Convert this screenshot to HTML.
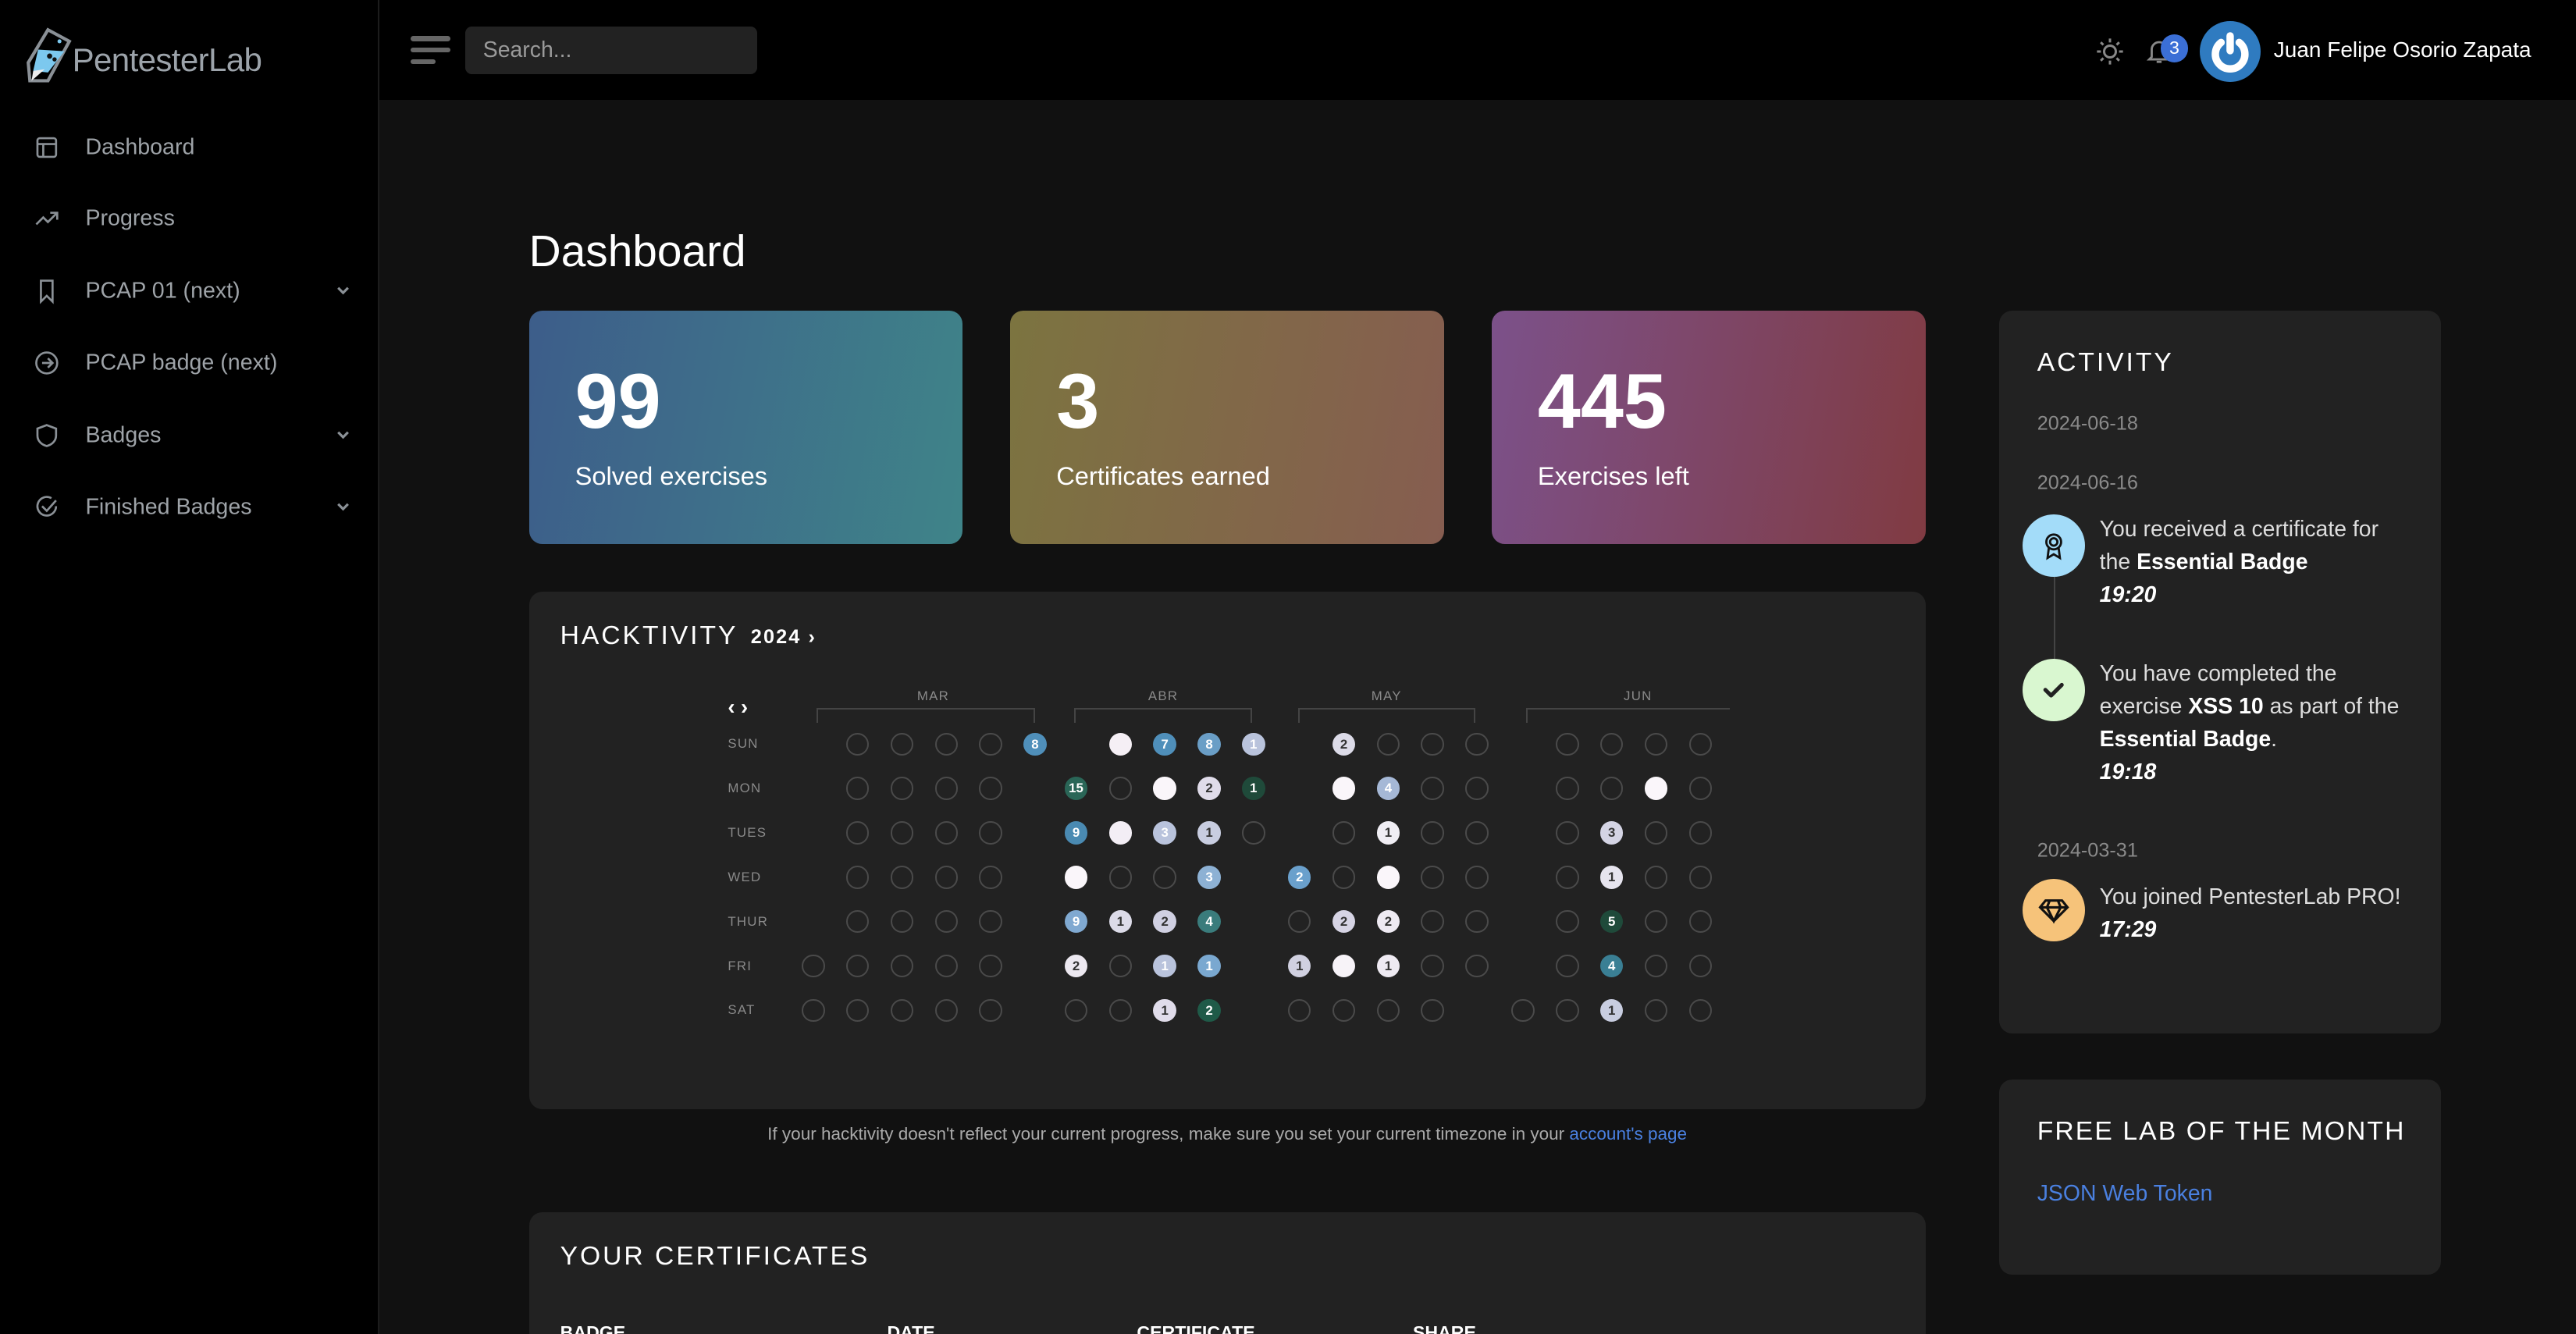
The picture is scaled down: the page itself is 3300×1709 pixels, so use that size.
<!DOCTYPE html>
<html><head><meta charset="utf-8">
<style>
*{margin:0;padding:0;box-sizing:border-box}
html,body{width:3300px;height:1708px;overflow:hidden;background:#111}
#r{position:absolute;left:0;top:0;width:1568px;height:812px;zoom:2.1046;font-family:"Liberation Sans",sans-serif;background:#111;overflow:hidden}
.a{position:absolute}
.side{left:0;top:0;width:231px;height:812px;background:#000;border-right:1px solid #1c1c1c}
.top{left:231px;top:0;right:0;height:61px;background:#000}
.nav{position:absolute;left:52px;font-size:13.6px;color:#9ea3a8;transform:translateY(-50%)}
.ico{position:absolute;left:20px;width:17px;height:17px;transform:translateY(-50%)}
.chev{position:absolute;left:204px;width:10px;height:10px;transform:translateY(-50%)}
.card{position:absolute;top:189px;width:264px;height:142px;border-radius:8px;color:#fff}
.card .n{position:absolute;left:28px;top:29px;font-size:47px;font-weight:bold;line-height:52px}
.card .l{position:absolute;left:28px;top:92px;font-size:15.5px}
.panel{position:absolute;background:#222;border-radius:8px}
.h{font-size:16px;letter-spacing:1.4px;color:#fff;position:absolute}
.c{position:absolute;width:14px;height:14px;border-radius:50%;margin:-7px 0 0 -7px;font-size:8px;text-align:center;line-height:14px;color:#333;font-weight:bold}
.e{border:1px solid #4a4a4a}
.w{color:#fff}
.d{position:absolute;left:443px;font-size:8px;color:#8a8a8a;letter-spacing:.6px;transform:translateY(-50%)}
.m{position:absolute;top:419px;font-size:8px;color:#8a8a8a;letter-spacing:.6px;transform:translateX(-50%)}
.br{position:absolute;top:431px;height:9px;border:1px solid #444;border-bottom:none}
.dt{position:absolute;left:1240px;font-size:12px;color:#8a8a8a;transform:translateY(-50%)}
.tx{position:absolute;left:1278px;font-size:13.5px;line-height:20px;color:#ddd}
.tx b{color:#fff}
.tx i{color:#fff;font-weight:bold}
.ci{position:absolute;left:1231px;width:38px;height:38px;border-radius:50%}
.th{position:absolute;top:805px;font-size:11px;font-weight:bold;color:#fff}
</style></head><body><div id="r">
<div class="a side"></div>
<div class="a top"></div>
<svg class="a" style="left:15px;top:16px" width="30" height="36" viewBox="0 0 30 36">
<path d="M14 2 L27 9 L14 33 L3 33 L2 22 Z" fill="none" stroke="#8a9096" stroke-width="2"/>
<path d="M8 14 L24 15 L14 28 L5 27 Z" fill="#7cc8ee"/>
<path d="M5 27 L12 26 L4 33 Z" fill="#eee"/>
<circle cx="15" cy="18" r="1.6" fill="#111"/><circle cx="18" cy="20" r="1.3" fill="#111"/><circle cx="21" cy="9" r="1.2" fill="#7cc8ee"/>
</svg>
<div class="a" style="left:44px;top:25px;font-size:20px;color:#9ca3aa;letter-spacing:-.3px">PentesterLab</div>
<svg class="ico" style="top:90px" viewBox="0 0 24 24" fill="none" stroke="#8a9096" stroke-width="1.8"><rect x="4" y="4" width="16" height="16" rx="2"/><path d="M4 9h16M9 9v11"/></svg>
<div class="nav" style="top:90px">Dashboard</div>
<svg class="ico" style="top:133px" viewBox="0 0 24 24" fill="none" stroke="#8a9096" stroke-width="1.8"><path d="M3 17l6-6 4 4 8-8M15 7h6v6"/></svg>
<div class="nav" style="top:133px">Progress</div>
<svg class="ico" style="top:177px" viewBox="0 0 24 24" fill="none" stroke="#8a9096" stroke-width="1.8"><path d="M7 3h10v18l-5-5-5 5z"/></svg>
<div class="nav" style="top:177px">PCAP 01 (next)</div>
<svg class="ico" style="top:221px" viewBox="0 0 24 24" fill="none" stroke="#8a9096" stroke-width="1.8"><circle cx="12" cy="12" r="9"/><path d="M8 12h8M13 8l4 4-4 4"/></svg>
<div class="nav" style="top:221px">PCAP badge (next)</div>
<svg class="ico" style="top:265px" viewBox="0 0 24 24" fill="none" stroke="#8a9096" stroke-width="1.8"><path d="M12 3l8 3v6c0 5-4 8-8 9-4-1-8-4-8-9V6z"/></svg>
<div class="nav" style="top:265px">Badges</div>
<svg class="ico" style="top:309px" viewBox="0 0 24 24" fill="none" stroke="#8a9096" stroke-width="1.8"><path d="M20 11a8 8 0 1 1-4-6.9"/><path d="M8 11l4 4 8-9"/></svg>
<div class="nav" style="top:309px">Finished Badges</div>
<svg class="chev" style="top:177px" viewBox="0 0 10 10"><path d="M2 3l3 3 3-3" fill="none" stroke="#8a9096" stroke-width="1.5"/></svg>
<svg class="chev" style="top:265px" viewBox="0 0 10 10"><path d="M2 3l3 3 3-3" fill="none" stroke="#8a9096" stroke-width="1.5"/></svg>
<svg class="chev" style="top:309px" viewBox="0 0 10 10"><path d="M2 3l3 3 3-3" fill="none" stroke="#8a9096" stroke-width="1.5"/></svg>
<div class="a" style="left:250px;top:22px;width:24px;height:3px;background:#666;border-radius:2px"></div>
<div class="a" style="left:250px;top:29px;width:24px;height:3px;background:#666;border-radius:2px"></div>
<div class="a" style="left:250px;top:36px;width:15px;height:3px;background:#666;border-radius:2px"></div>
<div class="a" style="left:283px;top:16px;width:178px;height:29px;background:#222;border-radius:4px"></div>
<div class="a" style="left:294px;top:23px;font-size:13.5px;color:#9a9a9a">Search...</div>
<svg class="a" style="left:1275px;top:22px" width="19" height="19" viewBox="0 0 24 24" fill="none" stroke="#888" stroke-width="1.8"><circle cx="12" cy="12" r="4.5"/><path d="M12 2v3M12 19v3M2 12h3M19 12h3M4.9 4.9l2 2M17.1 17.1l2 2M4.9 19.1l2-2M17.1 6.9l2-2"/></svg>
<svg class="a" style="left:1305px;top:21px" width="18" height="20" viewBox="0 0 24 24" fill="none" stroke="#888" stroke-width="1.8"><path d="M6 17V11a6 6 0 0 1 12 0v6l2 2H4z M10 21h4"/></svg>
<div class="a" style="left:1315px;top:21px;width:17px;height:17px;border-radius:50%;background:#3b6fd6;color:#fff;font-size:11px;text-align:center;line-height:17px">3</div>
<div class="a" style="left:1339px;top:13px;width:37px;height:37px;border-radius:50%;background:#2f7bc0"></div>
<svg class="a" style="left:1339px;top:13px" width="37" height="37" viewBox="0 0 37 37"><path d="M13 13 A9 9 0 1 0 24 13" fill="none" stroke="#fff" stroke-width="4.5" stroke-linecap="round"/><path d="M18.5 9v9" stroke="#fff" stroke-width="4.5" stroke-linecap="round"/></svg>
<div class="a" style="left:1384px;top:23px;font-size:13.3px;color:#fff">Juan Felipe Osorio Zapata</div>
<div class="a" style="left:322px;top:138px;font-size:27px;color:#fff">Dashboard</div>
<div class="card" style="left:322px;background:linear-gradient(100deg,#3d5d8a,#3f8489)"><div class="n">99</div><div class="l">Solved exercises</div></div>
<div class="card" style="left:615px;background:linear-gradient(100deg,#7c7440,#865d50)"><div class="n">3</div><div class="l">Certificates earned</div></div>
<div class="card" style="left:908px;background:linear-gradient(100deg,#7c518a,#803b42)"><div class="n">445</div><div class="l">Exercises left</div></div>
<div class="panel" style="left:322px;top:360px;width:850px;height:315px"></div>
<div class="h" style="left:341px;top:378px">HACKTIVITY</div>
<div class="a" style="left:457px;top:381px;font-size:12px;color:#fff;font-weight:bold;letter-spacing:1px">2024 ›</div>
<div class="a" style="left:443px;top:423px;font-size:13px;color:#fff;font-weight:bold">‹ ›</div>
<div class="m" style="left:568px">MAR</div><div class="m" style="left:708px">ABR</div><div class="m" style="left:844px">MAY</div><div class="m" style="left:997px">JUN</div>
<div class="br" style="left:497px;width:133px"></div><div class="br" style="left:654px;width:108px"></div><div class="br" style="left:790px;width:108px"></div><div class="br" style="left:929px;width:124px;border-right:none"></div>
<div class="d" style="top:453px">SUN</div><div class="d" style="top:480px">MON</div><div class="d" style="top:507px">TUES</div><div class="d" style="top:534px">WED</div><div class="d" style="top:561px">THUR</div><div class="d" style="top:588px">FRI</div><div class="d" style="top:615px">SAT</div>
<div class="c e" style="left:522px;top:453px"></div><div class="c e" style="left:549px;top:453px"></div><div class="c e" style="left:576px;top:453px"></div><div class="c e" style="left:603px;top:453px"></div>
<div class="c w" style="left:630px;top:453px;background:#4f8fba">8</div>
<div class="c" style="left:682px;top:453px;background:#f5eff5"></div>
<div class="c w" style="left:709px;top:453px;background:#4f8fba">7</div>
<div class="c w" style="left:736px;top:453px;background:#6a9ec6">8</div>
<div class="c w" style="left:763px;top:453px;background:#b9c3dc">1</div>
<div class="c" style="left:818px;top:453px;background:#dcdbe8">2</div>
<div class="c e" style="left:845px;top:453px"></div><div class="c e" style="left:872px;top:453px"></div><div class="c e" style="left:899px;top:453px"></div>
<div class="c e" style="left:954px;top:453px"></div><div class="c e" style="left:981px;top:453px"></div><div class="c e" style="left:1008px;top:453px"></div><div class="c e" style="left:1035px;top:453px"></div>
<div class="c e" style="left:522px;top:480px"></div><div class="c e" style="left:549px;top:480px"></div><div class="c e" style="left:576px;top:480px"></div><div class="c e" style="left:603px;top:480px"></div>
<div class="c w" style="left:655px;top:480px;background:#2a6657">15</div>
<div class="c e" style="left:682px;top:480px"></div>
<div class="c" style="left:709px;top:480px;background:#faf6fa"></div>
<div class="c" style="left:736px;top:480px;background:#e0dcea">2</div>
<div class="c w" style="left:763px;top:480px;background:#1f4a3a">1</div>
<div class="c" style="left:818px;top:480px;background:#faf6fa"></div>
<div class="c w" style="left:845px;top:480px;background:#a5b8d6">4</div>
<div class="c e" style="left:872px;top:480px"></div><div class="c e" style="left:899px;top:480px"></div>
<div class="c e" style="left:954px;top:480px"></div><div class="c e" style="left:981px;top:480px"></div>
<div class="c" style="left:1008px;top:480px;background:#faf6fa"></div>
<div class="c e" style="left:1035px;top:480px"></div>
<div class="c e" style="left:522px;top:507px"></div><div class="c e" style="left:549px;top:507px"></div><div class="c e" style="left:576px;top:507px"></div><div class="c e" style="left:603px;top:507px"></div>
<div class="c w" style="left:655px;top:507px;background:#4a8ab2">9</div>
<div class="c" style="left:682px;top:507px;background:#f3eef5"></div>
<div class="c w" style="left:709px;top:507px;background:#b9c3dc">3</div>
<div class="c" style="left:736px;top:507px;background:#c8cde0">1</div>
<div class="c e" style="left:763px;top:507px"></div>
<div class="c e" style="left:818px;top:507px"></div>
<div class="c" style="left:845px;top:507px;background:#f0eef4">1</div>
<div class="c e" style="left:872px;top:507px"></div><div class="c e" style="left:899px;top:507px"></div>
<div class="c e" style="left:954px;top:507px"></div>
<div class="c" style="left:981px;top:507px;background:#d4d4e4">3</div>
<div class="c e" style="left:1008px;top:507px"></div><div class="c e" style="left:1035px;top:507px"></div>
<div class="c e" style="left:522px;top:534px"></div><div class="c e" style="left:549px;top:534px"></div><div class="c e" style="left:576px;top:534px"></div><div class="c e" style="left:603px;top:534px"></div>
<div class="c" style="left:655px;top:534px;background:#faf6fa"></div>
<div class="c e" style="left:682px;top:534px"></div><div class="c e" style="left:709px;top:534px"></div>
<div class="c w" style="left:736px;top:534px;background:#8db1d4">3</div>
<div class="c w" style="left:791px;top:534px;background:#6aa0cc">2</div>
<div class="c e" style="left:818px;top:534px"></div>
<div class="c" style="left:845px;top:534px;background:#faf6fa"></div>
<div class="c e" style="left:872px;top:534px"></div><div class="c e" style="left:899px;top:534px"></div>
<div class="c e" style="left:954px;top:534px"></div>
<div class="c" style="left:981px;top:534px;background:#e6e4ee">1</div>
<div class="c e" style="left:1008px;top:534px"></div><div class="c e" style="left:1035px;top:534px"></div>
<div class="c e" style="left:522px;top:561px"></div><div class="c e" style="left:549px;top:561px"></div><div class="c e" style="left:576px;top:561px"></div><div class="c e" style="left:603px;top:561px"></div>
<div class="c w" style="left:655px;top:561px;background:#80a9d1">9</div>
<div class="c" style="left:682px;top:561px;background:#dcdbe8">1</div>
<div class="c" style="left:709px;top:561px;background:#d0d0e2">2</div>
<div class="c w" style="left:736px;top:561px;background:#3a7c7c">4</div>
<div class="c e" style="left:791px;top:561px"></div>
<div class="c" style="left:818px;top:561px;background:#d6d4e4">2</div>
<div class="c" style="left:845px;top:561px;background:#eeeaf2">2</div>
<div class="c e" style="left:872px;top:561px"></div><div class="c e" style="left:899px;top:561px"></div>
<div class="c e" style="left:954px;top:561px"></div>
<div class="c w" style="left:981px;top:561px;background:#1f4a3a">5</div>
<div class="c e" style="left:1008px;top:561px"></div><div class="c e" style="left:1035px;top:561px"></div>
<div class="c e" style="left:495px;top:588px"></div><div class="c e" style="left:522px;top:588px"></div><div class="c e" style="left:549px;top:588px"></div><div class="c e" style="left:576px;top:588px"></div><div class="c e" style="left:603px;top:588px"></div>
<div class="c" style="left:655px;top:588px;background:#ece8f0">2</div>
<div class="c e" style="left:682px;top:588px"></div>
<div class="c w" style="left:709px;top:588px;background:#b9c3dc">1</div>
<div class="c w" style="left:736px;top:588px;background:#7aa8d0">1</div>
<div class="c" style="left:791px;top:588px;background:#d0d0e0">1</div>
<div class="c" style="left:818px;top:588px;background:#f7f3f8"></div>
<div class="c" style="left:845px;top:588px;background:#eeeaf2">1</div>
<div class="c e" style="left:872px;top:588px"></div><div class="c e" style="left:899px;top:588px"></div>
<div class="c e" style="left:954px;top:588px"></div>
<div class="c w" style="left:981px;top:588px;background:#3a7f94">4</div>
<div class="c e" style="left:1008px;top:588px"></div><div class="c e" style="left:1035px;top:588px"></div>
<div class="c e" style="left:495px;top:615px"></div><div class="c e" style="left:522px;top:615px"></div><div class="c e" style="left:549px;top:615px"></div><div class="c e" style="left:576px;top:615px"></div><div class="c e" style="left:603px;top:615px"></div>
<div class="c e" style="left:655px;top:615px"></div><div class="c e" style="left:682px;top:615px"></div>
<div class="c" style="left:709px;top:615px;background:#e0dcea">1</div>
<div class="c w" style="left:736px;top:615px;background:#1f5a48">2</div>
<div class="c e" style="left:791px;top:615px"></div><div class="c e" style="left:818px;top:615px"></div><div class="c e" style="left:845px;top:615px"></div><div class="c e" style="left:872px;top:615px"></div>
<div class="c e" style="left:927px;top:615px"></div><div class="c e" style="left:954px;top:615px"></div>
<div class="c" style="left:981px;top:615px;background:#c8cde0">1</div>
<div class="c e" style="left:1008px;top:615px"></div><div class="c e" style="left:1035px;top:615px"></div>
<div class="a" style="left:322px;width:850px;top:684px;text-align:center;font-size:10.7px;color:#aaa">If your hacktivity doesn't reflect your current progress, make sure you set your current timezone in your <span style="color:#4a80e0">account's page</span></div>
<div class="panel" style="left:322px;top:738px;width:850px;height:100px"></div>
<div class="h" style="left:341px;top:756px">YOUR CERTIFICATES</div>
<div class="th" style="left:341px">BADGE</div><div class="th" style="left:540px">DATE</div><div class="th" style="left:692px">CERTIFICATE</div><div class="th" style="left:860px">SHARE</div>
<div class="panel" style="left:1217px;top:189px;width:269px;height:440px"></div>
<div class="h" style="left:1240px;top:212px">ACTIVITY</div>
<div class="dt" style="top:258px">2024-06-18</div>
<div class="dt" style="top:294px">2024-06-16</div>
<div class="dt" style="top:518px">2024-03-31</div>
<div class="a" style="left:1250px;top:351px;width:1px;height:50px;background:#444"></div>
<div class="ci" style="top:313px;background:#a3dcf9"></div>
<svg class="a" style="left:1241px;top:322px" width="18" height="20" viewBox="0 0 24 24" fill="none" stroke="#111" stroke-width="1.8"><circle cx="12" cy="9" r="6"/><circle cx="12" cy="9" r="3"/><path d="M8 14l-1 8 5-3 5 3-1-8"/></svg>
<div class="ci" style="top:401px;background:#d9f7d0"></div>
<svg class="a" style="left:1243px;top:413px" width="14" height="14" viewBox="0 0 14 14"><path d="M2 7l3.5 3.5L12 4" fill="none" stroke="#222" stroke-width="2.4" stroke-linecap="round" stroke-linejoin="round"/></svg>
<div class="ci" style="top:535px;background:#f6c37a"></div>
<svg class="a" style="left:1240px;top:545px" width="20" height="18" viewBox="0 0 24 20" fill="none" stroke="#111" stroke-width="1.8"><path d="M6 3h12l4 5-10 10L2 8z M2 8h20M9 3l-2 5 5 10 5-10-2-5"/></svg>
<div class="tx" style="top:312px">You received a certificate for<br>the <b>Essential Badge</b><br><i>19:20</i></div>
<div class="tx" style="top:400px">You have completed the<br>exercise <b>XSS 10</b> as part of the<br><b>Essential Badge</b>.<br><i>19:18</i></div>
<div class="tx" style="top:536px">You joined PentesterLab PRO!<br><i>17:29</i></div>
<div class="panel" style="left:1217px;top:657px;width:269px;height:119px"></div>
<div class="h" style="left:1240px;top:680px;letter-spacing:1px">FREE LAB OF THE MONTH</div>
<div class="a" style="left:1240px;top:719px;font-size:13.5px;color:#4a80e0">JSON Web Token</div>
</div></body></html>
